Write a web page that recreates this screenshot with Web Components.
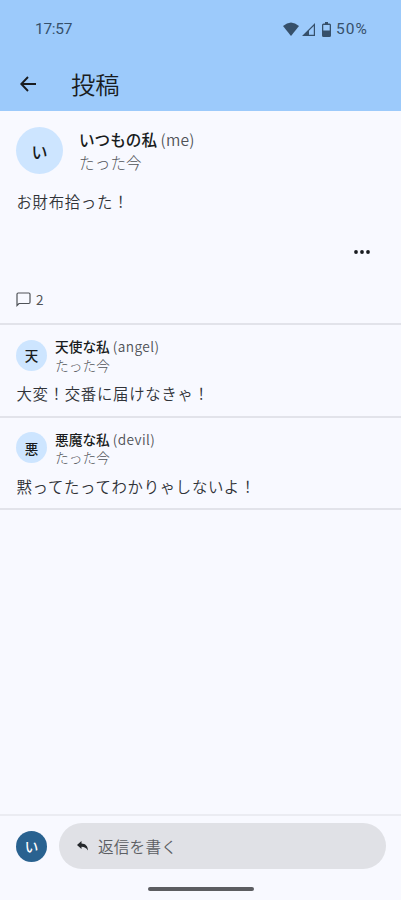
<!DOCTYPE html>
<html lang="ja">
<head>
<meta charset="utf-8">
<meta name="viewport" content="width=device-width, initial-scale=1">
<title>投稿</title>
<style>
  :root {
    --color-bar: #9ccafb;
    --color-background: #f8f9ff;
    --color-avatar: #cde5ff;
    --color-primary: #296290;
    --color-text: #191c20;
    --color-muted: #505358;
    --color-divider: #e2e3ea;
    --color-field: #e0e1e6;
  }

  body {
    margin: 0;
    background: var(--color-background);
    color: var(--color-text);
    font-family: "Noto Sans CJK JP", sans-serif;
  }
</style>
</head>
<body>
<post-screen></post-screen>

<script>
class StatusBar extends HTMLElement {
  constructor() {
    super();
    this.shadow = this.attachShadow({ mode: 'open' });
  }

  connectedCallback() {
    this.shadow.innerHTML = `
      <style>
        :host {
          display: flex;
          justify-content: space-between;
          align-items: center;
          height: 58px;
          padding: 0 33px 0 35px;
          box-sizing: border-box;
          color: #36506a;
          font: 400 15.500px/20px Roboto, sans-serif;
        }

        .time { letter-spacing: -0.300px; }

        .icons {
          display: flex;
          align-items: center;
          letter-spacing: 1.100px;
        }

        svg {
          display: block;
          fill: currentColor;
        }

        .wifi { margin-right: 3px; }
        .signal { margin-right: 7px; }
        .battery { margin-right: 5px; }
      </style>
      <span class="time">${this.getAttribute('time')}</span>
      <div class="icons">
        <svg class="wifi" width="16" height="14" viewBox="0 0 17 14" preserveAspectRatio="none"><path d="M0 4Q8.500-3 17 4L8.500 14Z"/></svg>
        <svg class="signal" width="13" height="13" viewBox="0 0 13 13"><path fill-rule="evenodd" d="M0 13L13 0V13ZM7 11.800H11.800V3L7 7.800Z"/></svg>
        <svg class="battery" width="9" height="15" viewBox="0 0 9 15"><path fill-rule="evenodd" d="M3 0H6V1.500H7.500Q9 1.500 9 3V13.500Q9 15 7.500 15H1.500Q0 15 0 13.500V3Q0 1.500 1.500 1.500H3ZM1.300 3V8.500H7.700V3Z"/></svg>
        <span>${this.getAttribute('battery')}</span>
      </div>
    `;
  }
}

class AppBar extends HTMLElement {
  constructor() {
    super();
    this.shadow = this.attachShadow({ mode: 'open' });
    this.shadow.innerHTML = `
      <style>
        :host {
          display: block;
          height: 111px;
          background: var(--color-bar);
        }

        .title-row {
          display: flex;
          align-items: center;
          height: 52px;
          padding-left: 20px;
          gap: 35px;
        }

        h1 {
          margin: 0;
          font-size: 24.300px;
          line-height: 34px;
          font-weight: 350;
        }
      </style>
      <slot name="status"></slot>
      <div class="title-row">
        <svg width="16" height="16" viewBox="0 0 16 16" fill="none" stroke="currentColor" stroke-width="1.900"><path d="M8 1L1.300 8L8 15M1.300 8H16"/></svg>
        <h1><slot></slot></h1>
      </div>
    `;
  }
}

class UserAvatar extends HTMLElement {
  constructor() {
    super();
    this.shadow = this.attachShadow({ mode: 'open' });
    this.shadow.innerHTML = `
      <style>
        :host {
          display: flex;
          flex: none;
          align-items: center;
          justify-content: center;
          width: 31px;
          height: 31px;
          border-radius: 50%;
          background: var(--color-avatar);
          font-size: 13.500px;
          font-weight: 500;
          line-height: 20px;
        }

        :host([large]) {
          width: 47px;
          height: 47px;
          font-size: 16px;
        }

        :host([me]) {
          background: var(--color-primary);
          color: #fff;
        }
      </style>
      <slot></slot>
    `;
  }
}

class PostItem extends HTMLElement {
  constructor() {
    super();
    this.shadow = this.attachShadow({ mode: 'open' });
  }

  connectedCallback() {
    const name = this.getAttribute('name');
    const large = this.hasAttribute('large') ? 'large' : '';
    this.shadow.innerHTML = `
      <style>
        :host {
          display: block;
          height: 92.500px;
          box-sizing: border-box;
          padding: 12px 16px 0;
          border-bottom: 2px solid var(--color-divider);
        }

        :host([large]) {
          height: 214px;
          padding-top: 16px;
        }

        .head {
          display: flex;
          align-items: center;
          gap: 8px;
          height: 36px;
          font-size: 13.700px;
          line-height: 18.500px;
        }

        .user { padding-top: 1px; }

        :host([large]) .head {
          gap: 16px;
          height: 47px;
          font-size: 15.600px;
          line-height: 23px;
        }

        .name { font-weight: 500; }
        .handle, .time { color: var(--color-muted); }

        .handle {
          font-weight: 350;
          letter-spacing: 0.400px;
        }

        :host([large]) .handle { letter-spacing: 0.250px; }

        .time {
          font-weight: 300;
          letter-spacing: 0.100px;
        }

        p {
          margin: 8px 0 0 0.500px;
          font-size: 15.400px;
          line-height: 24px;
          letter-spacing: 0.700px;
          font-weight: 350;
          color: #303338;
        }

        :host([large]) p { margin-top: 15px; }
      </style>
      <div class="head">
        <user-avatar ${large}>${name[0]}</user-avatar>
        <div class="user">
          <div class="name">${name} <span class="handle">(${this.getAttribute('handle')})</span></div>
          <div class="time">${this.getAttribute('time')}</div>
        </div>
      </div>
      <p><slot></slot></p>
      <slot name="actions"></slot>
    `;
  }
}

class PostActions extends HTMLElement {
  constructor() {
    super();
    this.shadow = this.attachShadow({ mode: 'open' });
  }

  connectedCallback() {
    this.shadow.innerHTML = `
      <style>
        :host { display: block; }

        .more {
          display: flex;
          justify-content: flex-end;
          padding: 37px 15px 0 0;
        }

        .comments {
          display: flex;
          align-items: center;
          gap: 5px;
          height: 20px;
          margin-top: 35px;
          color: var(--color-muted);
          font-size: 13.500px;
          line-height: 20px;
        }

        svg { display: block; }
      </style>
      <div class="more">
        <svg width="16" height="4" viewBox="0 0 16 4" fill="currentColor"><circle cx="2" cy="2" r="1.900"/><circle cx="8" cy="2" r="1.900"/><circle cx="14" cy="2" r="1.900"/></svg>
      </div>
      <div class="comments">
        <svg width="15" height="15" viewBox="0 0 15 15" fill="none" stroke="currentColor" stroke-width="1.200"><path d="M1 13.500V2.200Q1 1 2.200 1H12.800Q14 1 14 2.200V10.300Q14 11.500 12.800 11.500H3Z"/></svg>
        <span>${this.getAttribute('comments')}</span>
      </div>
    `;
  }
}

class ReplyBar extends HTMLElement {
  constructor() {
    super();
    this.shadow = this.attachShadow({ mode: 'open' });
    this.shadow.innerHTML = `
      <style>
        :host {
          display: block;
          height: 86px;
          box-sizing: border-box;
          border-top: 2px solid #ebecf2;
        }

        .row {
          display: flex;
          align-items: center;
          gap: 12px;
          padding: 7px 15px 0 16px;
        }

        .field {
          display: flex;
          flex: 1;
          align-items: center;
          gap: 10px;
          height: 46px;
          padding-left: 18px;
          box-sizing: border-box;
          border-radius: 23px;
          background: var(--color-field);
          color: #5c5f64;
          font-size: 15.600px;
          line-height: 24px;
          font-weight: 350;
          letter-spacing: 0.200px;
        }

        .handle {
          width: 106px;
          height: 4px;
          margin: 18px auto 0;
          border-radius: 2px;
          background: #5c5d61;
        }
      </style>
      <div class="row">
        <user-avatar me>い</user-avatar>
        <div class="field">
          <svg width="11" height="10" viewBox="0 0 11 10" fill="#24272b"><path d="M0 4L4.500 0V2.500C8.500 2.700 10.800 5 11 9.500C9.300 6.800 7.500 5.800 4.500 5.700V8Z"/></svg>
          <slot></slot>
        </div>
      </div>
      <div class="handle"></div>
    `;
  }
}

class PostScreen extends HTMLElement {
  constructor() {
    super();
    this.shadow = this.attachShadow({ mode: 'open' });
    this.shadow.innerHTML = `
      <style>
        :host {
          display: flex;
          flex-direction: column;
          height: 900px;
        }

        main { flex: 1; }
      </style>
      <app-bar>
        <status-bar slot="status" time="17:57" battery="50%"></status-bar>
        投稿
      </app-bar>
      <main>
        <post-item large name="いつもの私" handle="me" time="たった今">お財布拾った！<post-actions slot="actions" comments="2"></post-actions></post-item>
        <post-item name="天使な私" handle="angel" time="たった今">大変！交番に届けなきゃ！</post-item>
        <post-item name="悪魔な私" handle="devil" time="たった今">黙ってたってわかりゃしないよ！</post-item>
      </main>
      <reply-bar>返信を書く</reply-bar>
    `;
  }
}

customElements.define('status-bar', StatusBar);
customElements.define('app-bar', AppBar);
customElements.define('user-avatar', UserAvatar);
customElements.define('post-item', PostItem);
customElements.define('post-actions', PostActions);
customElements.define('reply-bar', ReplyBar);
customElements.define('post-screen', PostScreen);
</script>
</body>
</html>
